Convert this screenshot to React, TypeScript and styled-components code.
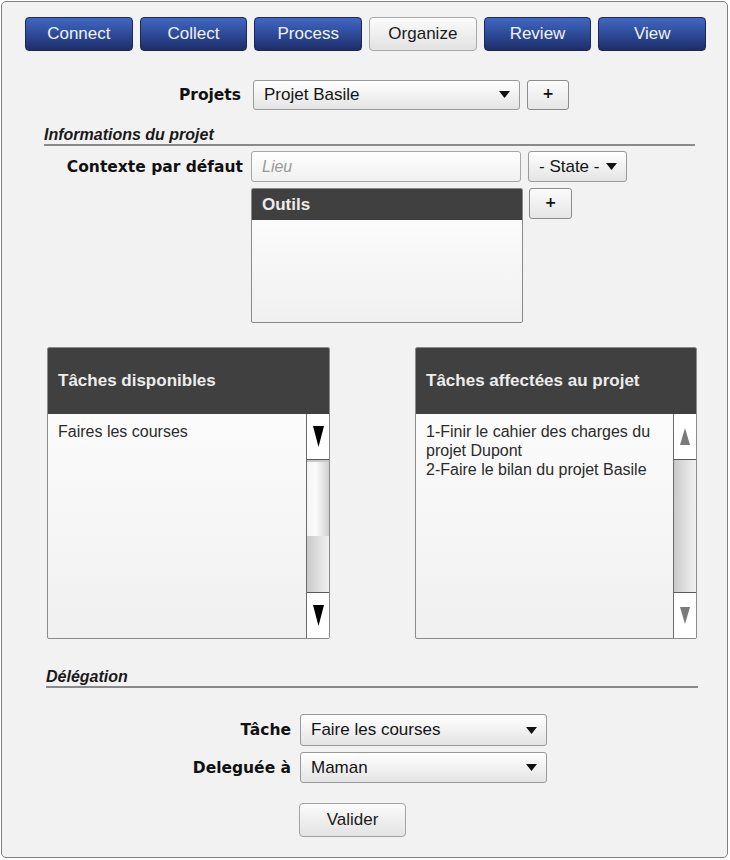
import React from "react";
import styled, { createGlobalStyle, css } from "styled-components";

const Global = createGlobalStyle`
  * { box-sizing: border-box; }
  html, body { margin: 0; padding: 0; background: #ffffff; }
  body { font-family: "Liberation Sans", Arial, sans-serif; }
`;

const Frame = styled.div`
  margin: 1px;
  width: 727px;
  height: 857px;
  border: 1px solid #7f7f7f;
  border-radius: 5px;
  background: #f2f2f2;
  display: flex;
  flex-direction: column;
  overflow: hidden;
`;

const Nav = styled.nav`
  margin: 15px 0 0 23px;
  width: 681px;
  height: 34px;
  display: flex;
  gap: 7px;
`;

const NavButton = styled.button<{ $active?: boolean }>`
  flex: 1;
  height: 34px;
  border-radius: 4px;
  font-family: "Liberation Sans", Arial, sans-serif;
  font-size: 17px;
  padding: 0 0 1px 0;
  cursor: pointer;
  ${(p) =>
    p.$active
      ? css`
          background: linear-gradient(#fbfbfb, #e2e2e2);
          border: 1px solid #a9a9a9;
          color: #1a1a1a;
        `
      : css`
          background: linear-gradient(#4067c4, #203473 90%, #1d2d62);
          border: 1px solid #1c2853;
          color: #eef2fb;
        `}
`;

const Row = styled.div<{ $top: number; $height: number; $indent?: number }>`
  margin-top: ${(p) => p.$top}px;
  margin-left: ${(p) => p.$indent ?? 0}px;
  height: ${(p) => p.$height}px;
  display: flex;
  align-items: center;
`;

const TopRow = styled(Row)`
  align-items: flex-start;
`;

const Label = styled.label<{ $width: number; $gap: number }>`
  width: ${(p) => p.$width}px;
  margin-right: ${(p) => p.$gap}px;
  text-align: right;
  font-family: "DejaVu Sans", Verdana, sans-serif;
  font-weight: bold;
  font-size: 15.5px;
  color: #111;
  white-space: nowrap;
`;

const SelectBox = styled.div<{ $width: number; $height: number; $gap?: number }>`
  width: ${(p) => p.$width}px;
  height: ${(p) => p.$height}px;
  margin-left: ${(p) => p.$gap ?? 0}px;
  border: 1px solid #9a9a9a;
  border-radius: 3px;
  background: linear-gradient(#ffffff, #e4e4e4);
  display: flex;
  align-items: center;
  padding: 0 9px 0 10px;
  font-family: "Liberation Sans", Arial, sans-serif;
  font-size: 17px;
  color: #141414;
  white-space: nowrap;
`;

const SelectText = styled.span`
  flex: 1;
`;

const Caret = styled.svg`
  width: 11px;
  height: 7px;
  flex: none;
`;

const PlusButton = styled.button<{ $width: number; $height: number; $gap: number }>`
  width: ${(p) => p.$width}px;
  height: ${(p) => p.$height}px;
  margin-left: ${(p) => p.$gap}px;
  border: 1px solid #8c8c8c;
  border-radius: 3px;
  background: linear-gradient(#fbfbfb, #e6e6e6);
  font-family: "DejaVu Sans", sans-serif;
  font-weight: bold;
  font-size: 14px;
  color: #111;
  padding: 0 0 3px 0;
`;

const SectionTitle = styled.h2<{ $top: number; $indent: number; $width: number }>`
  margin: ${(p) => p.$top}px 0 0 ${(p) => p.$indent}px;
  width: ${(p) => p.$width}px;
  font-family: "Liberation Sans", Arial, sans-serif;
  font-style: italic;
  font-weight: bold;
  font-size: 16px;
  line-height: 19px;
  color: #1a1a1a;
  border-bottom: 2px solid #8a8a8a;
  padding: 0;
`;

const TextInput = styled.div`
  width: 270px;
  height: 31px;
  border: 1px solid #a6a6a6;
  border-radius: 3px;
  background: linear-gradient(#ffffff, #f0f0f0);
  padding-left: 10px;
  display: flex;
  align-items: center;
  font-style: italic;
  font-size: 16px;
  color: #9a9a9a;
`;

const Panel = styled.div<{ $width: number; $height: number }>`
  width: ${(p) => p.$width}px;
  height: ${(p) => p.$height}px;
  border: 1px solid #8a8a8a;
  border-radius: 2px;
  display: flex;
  flex-direction: column;
  background: linear-gradient(#ffffff, #f0f0f0);
  overflow: hidden;
`;

const PanelHeader = styled.div<{ $height: number }>`
  height: ${(p) => p.$height}px;
  flex: none;
  background: #404040;
  color: #ececec;
  font-weight: bold;
  font-size: 17px;
  display: flex;
  align-items: center;
  padding-left: 10px;
`;

const PanelBody = styled.div`
  flex: 1;
  display: flex;
  min-height: 0;
`;

const ListText = styled.div`
  flex: 1;
  padding: 8px 10px;
  font-size: 16px;
  line-height: 19px;
  color: #2b2b2b;
`;

const Scrollbar = styled.div`
  width: 23px;
  flex: none;
  border-left: 1px solid #6a6a6a;
  display: flex;
  flex-direction: column;
`;

const ScrollButton = styled.div<{ $pos: "top" | "bottom" }>`
  height: 46px;
  flex: none;
  background: #ffffff;
  display: flex;
  align-items: center;
  justify-content: center;
  ${(p) =>
    p.$pos === "top"
      ? css`border-bottom: 1px solid #5a5a5a;`
      : css`border-top: 1px solid #5a5a5a;`}
`;

const Thumb = styled.div<{ $size: number }>`
  height: ${(p) => p.$size}px;
  flex: none;
  background: linear-gradient(90deg, #f4f4f4, #fbfbfb 40%, #d0d0d0);
  border-top: 2px solid #c8c8c8;
`;

const Track = styled.div`
  flex: 1;
  background: linear-gradient(90deg, #c9c9c9, #e6e6e6 70%, #efefef);
`;

const PanelsRow = styled.div`
  margin: 24px 0 0 45px;
  display: flex;
  gap: 85px;
`;

const SubmitButton = styled.button`
  margin: 20px 0 0 297px;
  width: 107px;
  height: 34px;
  border: 1px solid #a3a3a3;
  border-radius: 4px;
  background: linear-gradient(#fbfbfb, #e3e3e3);
  font-family: "Liberation Sans", Arial, sans-serif;
  font-size: 17px;
  color: #1a1a1a;
  padding: 0;
`;

const CaretIcon = () => (
  <Caret viewBox="0 0 11 7">
    <polygon points="0,0 11,0 5.5,7" fill="#111" />
  </Caret>
);

const Select = ({
  value,
  width,
  height,
  gap,
}: {
  value: string;
  width: number;
  height: number;
  gap?: number;
}) => (
  <SelectBox $width={width} $height={height} $gap={gap}>
    <SelectText>{value}</SelectText>
    <CaretIcon />
  </SelectBox>
);

const Arrow = ({ dir, color, w, h }: { dir: "up" | "down"; color: string; w: number; h: number }) => (
  <svg width={w} height={h} viewBox={`0 0 ${w} ${h}`}>
    {dir === "down" ? (
      <polygon points={`0,0 ${w},0 ${w / 2},${h}`} fill={color} />
    ) : (
      <polygon points={`${w / 2},0 ${w},${h} 0,${h}`} fill={color} />
    )}
  </svg>
);

export default function App() {
  const tabs = ["Connect", "Collect", "Process", "Organize", "Review", "View"];
  return (
    <>
      <Global />
      <Frame>
        <Nav>
          {tabs.map((t) => (
            <NavButton key={t} $active={t === "Organize"}>
              {t}
            </NavButton>
          ))}
        </Nav>

        <Row $top={28} $height={31}>
          <Label $width={239} $gap={12}>Projets</Label>
          <Select value="Projet Basile" width={267} height={30} />
          <PlusButton $width={42} $height={30} $gap={7}>+</PlusButton>
        </Row>

        <SectionTitle $top={15} $indent={42} $width={651}>
          Informations du projet
        </SectionTitle>

        <Row $top={5} $height={31}>
          <Label $width={241} $gap={8}>Contexte par défaut</Label>
          <TextInput>Lieu</TextInput>
          <Select value="- State -" width={99} height={31} gap={7} />
        </Row>

        <TopRow $top={6} $height={135} $indent={249}>
          <Panel $width={272} $height={135}>
            <PanelHeader $height={31}>Outils</PanelHeader>
          </Panel>
          <PlusButton $width={43} $height={31} $gap={6}>+</PlusButton>
        </TopRow>

        <PanelsRow>
          <Panel $width={283} $height={292}>
            <PanelHeader $height={66}>Tâches disponibles</PanelHeader>
            <PanelBody>
              <ListText>Faires les courses</ListText>
              <Scrollbar>
                <ScrollButton $pos="top">
                  <Arrow dir="down" color="#000" w={11} h={21} />
                </ScrollButton>
                <Thumb $size={76} />
                <Track />
                <ScrollButton $pos="bottom">
                  <Arrow dir="down" color="#000" w={11} h={21} />
                </ScrollButton>
              </Scrollbar>
            </PanelBody>
          </Panel>
          <Panel $width={282} $height={292}>
            <PanelHeader $height={66}>Tâches affectées au projet</PanelHeader>
            <PanelBody>
              <ListText>
                1-Finir le cahier des charges du projet Dupont
                <br />
                2-Faire le bilan du projet Basile
              </ListText>
              <Scrollbar>
                <ScrollButton $pos="top">
                  <Arrow dir="up" color="#7a7a7a" w={10} h={17} />
                </ScrollButton>
                <Track />
                <ScrollButton $pos="bottom">
                  <Arrow dir="down" color="#7a7a7a" w={10} h={17} />
                </ScrollButton>
              </Scrollbar>
            </PanelBody>
          </Panel>
        </PanelsRow>

        <SectionTitle $top={28} $indent={44} $width={652}>
          Délégation
        </SectionTitle>

        <Row $top={26} $height={32}>
          <Label $width={289} $gap={9}>Tâche</Label>
          <Select value="Faire les courses" width={247} height={32} />
        </Row>
        <Row $top={6} $height={31}>
          <Label $width={289} $gap={9}>Deleguée à</Label>
          <Select value="Maman" width={247} height={31} />
        </Row>

        <SubmitButton>Valider</SubmitButton>
      </Frame>
    </>
  );
}
